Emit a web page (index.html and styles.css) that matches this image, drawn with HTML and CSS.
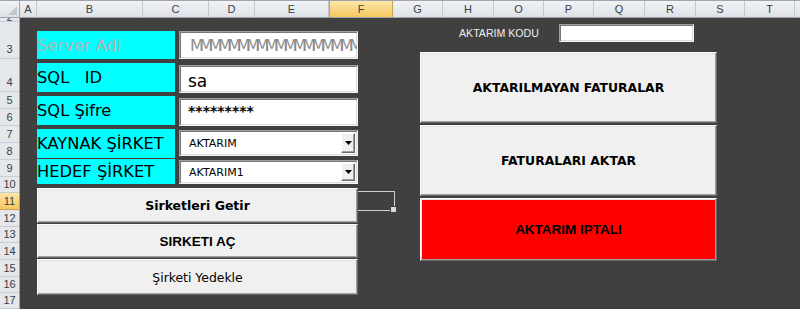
FILE: index.html
```html
<!DOCTYPE html>
<html lang="tr">
<head>
    <meta charset="UTF-8">
    <meta name="viewport" content="width=device-width, initial-scale=1.0">
    <title>Fatura Aktarım</title>
    <link rel="stylesheet" href="styles.css">
</head>
<body>
    <div class="sheet">
        <div class="corner"></div>

        <!-- Column letters -->
        <div class="col-heads">
            <div class="col col-a">A</div>
            <div class="col col-b">B</div>
            <div class="col col-c">C</div>
            <div class="col col-d">D</div>
            <div class="col col-e">E</div>
            <div class="col col-f col-active">F</div>
            <div class="col col-g">G</div>
            <div class="col col-h">H</div>
            <div class="col col-o">O</div>
            <div class="col col-p">P</div>
            <div class="col col-q">Q</div>
            <div class="col col-r">R</div>
            <div class="col col-s">S</div>
            <div class="col col-t">T</div>
        </div>

        <!-- Row numbers -->
        <div class="row-heads">
            <div class="row row-2">2</div>
            <div class="row row-3">3</div>
            <div class="row row-4">4</div>
            <div class="row">5</div>
            <div class="row">6</div>
            <div class="row">7</div>
            <div class="row">8</div>
            <div class="row">9</div>
            <div class="row row-short">10</div>
            <div class="row row-active">11</div>
            <div class="row">12</div>
            <div class="row row-short">13</div>
            <div class="row">14</div>
            <div class="row">15</div>
            <div class="row row-short">16</div>
            <div class="row row-short">17</div>
        </div>

        <!-- Sheet with the form controls -->
        <div class="cells">
            <div class="cell-sel"></div>

            <div class="panel-left">
                <div class="field field-1">
                    <div class="tag tag-muted">Server Adi</div>
                    <div class="textbox tb-server">MMMMMMMMMMMMMMMMMMMMMM</div>
                </div>
                <div class="field field-2">
                    <div class="tag">SQL   ID</div>
                    <div class="textbox tb-low">sa</div>
                </div>
                <div class="field field-3">
                    <div class="tag">SQL Şifre</div>
                    <div class="textbox tb-low tb-pass">*********</div>
                </div>
                <div class="field field-4">
                    <div class="tag">KAYNAK ŞİRKET</div>
                    <div class="combo combo-1">
                        <span class="combo-text">AKTARIM</span>
                        <span class="combo-btn">
                            <svg width="7" height="4" viewBox="0 0 7 4"><path d="M0 0h7L3.5 4z" fill="#000"/></svg>
                        </span>
                    </div>
                </div>
                <div class="field field-5">
                    <div class="tag">HEDEF ŞİRKET</div>
                    <div class="combo combo-2">
                        <span class="combo-text">AKTARIM1</span>
                        <span class="combo-btn">
                            <svg width="7" height="4" viewBox="0 0 7 4"><path d="M0 0h7L3.5 4z" fill="#000"/></svg>
                        </span>
                    </div>
                </div>

                <button class="btn btn-getir">Sirketleri Getir</button>
                <button class="btn btn-ac">SIRKETI AÇ</button>
                <button class="btn btn-yedek">Şirketi Yedekle</button>
            </div>

            <div class="panel-right">
                <div class="kod-row">
                    <span class="kod-label">AKTARIM KODU</span>
                    <div class="textbox tb-kod"></div>
                </div>
                <button class="btn btn-big">AKTARILMAYAN FATURALAR</button>
                <button class="btn btn-big">FATURALARI AKTAR</button>
                <button class="btn btn-iptal">AKTARIM IPTALI</button>
            </div>
        </div>
    </div>
</body>
</html>
```

FILE: styles.css
```css
/* General */
* {
    box-sizing: border-box;
}
body {
    margin: 0;
    background-color: #404040;
    font-family: "DejaVu Sans", sans-serif;
    overflow: hidden;
}
.sheet {
    display: grid;
    grid-template-columns: 20px 780px;
    grid-template-rows: 18px 291px;
    width: 800px;
    height: 309px;
}

/* Headers */
.corner {
    position: relative;
    background: linear-gradient(#f1f3f6, #dde1e6);
    border-top: 1px solid #9ea5ae;
    border-right: 1px solid #9ea5ae;
    border-bottom: 1px solid #9ea5ae;
}
.corner::after {
    content: "";
    position: absolute;
    right: 2px;
    bottom: 2px;
    border-left: 9px solid transparent;
    border-bottom: 9px solid #c3c8cf;
}
.col-heads {
    display: flex;
    background: linear-gradient(#f1f3f6, #dde1e6);
    border-top: 1px solid #9ea5ae;
    border-bottom: 1px solid #9ea5ae;
    overflow: hidden;
}
.col {
    flex: none;
    border-right: 1px solid #c3c8cf;
    text-align: center;
    font: 11px/16px "Liberation Sans", Arial, sans-serif;
    color: #3a3f47;
}
.col-a { width: 17px; }
.col-b { width: 106px; }
.col-c { width: 66px; }
.col-d { width: 46px; }
.col-e { width: 74px; }
.col-f { width: 64px; }
.col-g { width: 50px; }
.col-h { width: 51px; }
.col-o { width: 50px; }
.col-p { width: 50px; }
.col-q { width: 51px; }
.col-r { width: 51px; }
.col-s { width: 49px; }
.col-t { width: 50px; }
.col-active {
    background: linear-gradient(#fde7a8, #f6c75e);
    border-left: 1px solid #c9a24c;
    border-right-color: #c9a24c;
}

.row-heads {
    display: flex;
    flex-direction: column;
    background-color: #e4e7ec;
    border-right: 1px solid #9ea5ae;
    overflow: hidden;
}
.row {
    flex: none;
    height: 17px;
    display: flex;
    align-items: flex-end;
    justify-content: center;
    padding-bottom: 1px;
    border-bottom: 1px solid #c9cdd3;
    font: 11px/14px "Liberation Sans", Arial, sans-serif;
    color: #3a3f47;
    overflow: hidden;
}
.row-2 {
    height: 4px;
    padding-bottom: 0;
    line-height: 7px;
}
.row-3 { height: 37px; padding-bottom: 2px; }
.row-4 { height: 33px; padding-bottom: 2px; }
.row-short { height: 16px; }
.row-active {
    background: linear-gradient(#fde7a8, #f6c75e);
    border-bottom-color: #c9a24c;
}

/* Sheet area */
.cells {
    position: relative;
    display: flex;
    align-items: flex-start;
    padding: 6px 0 0 17px;
}
.cell-sel {
    position: absolute;
    left: 309px;
    top: 173px;
    width: 66px;
    height: 20px;
    border: 1px solid #cfcfcf;
}
.cell-sel::after {
    content: "";
    position: absolute;
    right: -3px;
    bottom: -3px;
    width: 5px;
    height: 5px;
    background-color: #d9d9d9;
    border: 1px solid #404040;
}

/* Left panel */
.panel-left {
    position: relative;
    z-index: 1;
    width: 321px;
    margin-top: 7px;
    display: flex;
    flex-direction: column;
}
.field {
    display: flex;
    gap: 4px;
    align-items: flex-start;
    flex: none;
}
.field-1 { height: 28px; margin-bottom: 4px; }
.field-2 { height: 29px; margin-bottom: 4px; }
.field-3 { height: 29px; margin-bottom: 4px; }
.field-4 { height: 29px; margin-bottom: 1px; }
.field-5 { height: 25px; margin-bottom: 4px; }

.tag {
    width: 138px;
    height: 100%;
    display: flex;
    align-items: center;
    background-color: #00ffff;
    color: #000;
    font-size: 16.3px;
    white-space: pre;
}
.tag-muted {
    color: #b3b3b3;
}

.textbox {
    width: 179px;
    height: 28px;
    background-color: #fff;
    border: 1px solid;
    border-color: #a0a0a0 #f4f4f4 #f4f4f4 #a0a0a0;
    box-shadow: inset 1px 1px #787878, inset -1px -1px #dcdcdc;
    display: flex;
    align-items: center;
    padding-left: 8px;
    color: #000;
    overflow: hidden;
    white-space: nowrap;
}
.tb-server {
    padding-left: 10px;
    font-size: 16px;
    letter-spacing: -4.45px;
    color: #8e8e8e;
}
.tb-low {
    margin-top: 2px;
    font-size: 17px;
    padding-top: 4px;
}
.tb-pass {
    font-size: 14px;
    font-weight: bold;
    align-items: flex-start;
    padding-top: 4px;
}

.combo {
    width: 179px;
    margin-top: 1px;
    display: flex;
    align-items: center;
    background-color: #fff;
    border: 1px solid;
    border-color: #a0a0a0 #f4f4f4 #f4f4f4 #a0a0a0;
    box-shadow: inset 1px 1px #787878, inset -1px -1px #dcdcdc;
    padding: 2px 2px 2px 9px;
}
.combo-1 { height: 26px; }
.combo-2 { height: 24px; }
.combo-text {
    flex: 1;
    font-size: 11px;
    color: #000;
}
.combo-btn {
    width: 14px;
    height: 100%;
    display: flex;
    align-items: center;
    justify-content: center;
    background-color: #f0f0f0;
    border: 1px solid;
    border-color: #fff #696969 #696969 #fff;
    box-shadow: inset -1px -1px #a0a0a0;
}

/* Buttons */
.btn {
    flex: none;
    display: flex;
    align-items: center;
    justify-content: center;
    width: 100%;
    margin: 0;
    padding: 0;
    font-family: "DejaVu Sans", sans-serif;
    font-weight: bold;
    font-size: 12.5px;
    color: #000;
    background-color: #f0f0f0;
    border: 1px solid;
    border-color: #fff #696969 #696969 #fff;
    box-shadow: inset -1px -1px #a0a0a0, inset 1px 1px #e3e3e3;
}
.btn-getir { height: 35px; }
.btn-ac {
    height: 34px;
    margin-top: 1px;
    font-family: "Liberation Sans", Arial, sans-serif;
    font-size: 13.5px;
}
.btn-yedek {
    height: 36px;
    margin-top: 1px;
    font-weight: normal;
    font-size: 12.4px;
}

/* Right panel */
.panel-right {
    width: 297px;
    margin-left: 62px;
    display: flex;
    flex-direction: column;
}
.kod-row {
    display: flex;
    align-items: center;
    height: 18px;
    padding-left: 39px;
    gap: 20px;
    margin-bottom: 10px;
}
.kod-label {
    font: 10.6px "Liberation Sans", Arial, sans-serif;
    color: #efefef;
}
.tb-kod {
    width: 135px;
    height: 18px;
}
.btn-big {
    height: 71px;
    font-size: 12.4px;
}
.btn-big + .btn-big {
    margin-top: 2px;
}
.btn-iptal {
    height: 63px;
    margin-top: 2px;
    background-color: #ff0000;
    font-family: "Liberation Sans", Arial, sans-serif;
    font-size: 13.5px;
}
```
